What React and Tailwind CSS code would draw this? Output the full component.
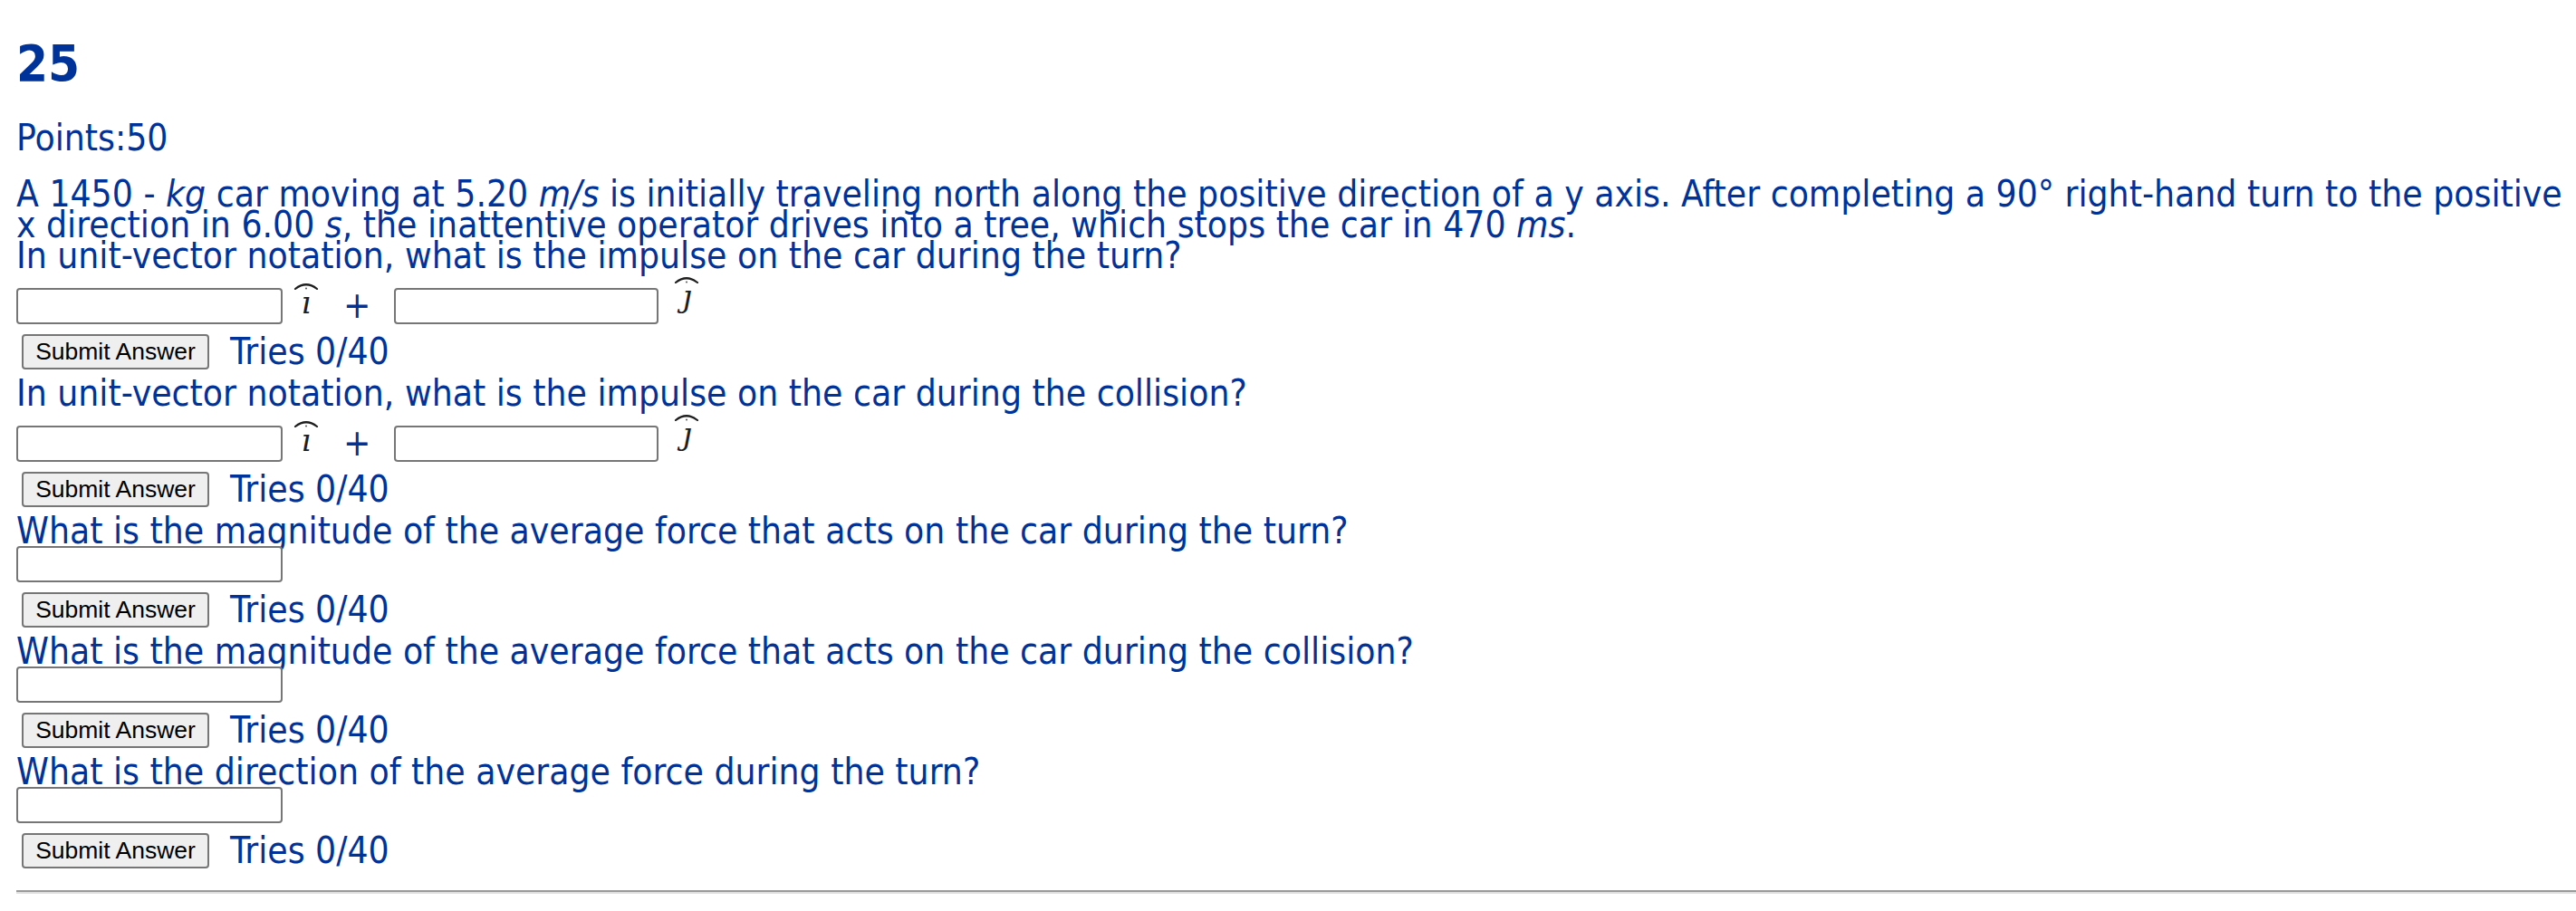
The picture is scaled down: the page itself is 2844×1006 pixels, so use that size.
import React from "react";

const FONT = { fontFamily: '"DejaVu Sans Condensed", "DejaVu Sans", Verdana, sans-serif' };
const BTN_FONT = { fontFamily: '"Liberation Sans", Arial, sans-serif' };
const SERIF = { fontFamily: '"DejaVu Serif", "Liberation Serif", serif' };

function Arc() {
  return (
    <svg width="28" height="9" viewBox="0 0 28 9" className="absolute left-0 -top-[6px]">
      <path d="M2 8 Q14 -1.5 26 8" fill="none" stroke="#1e1e1e" strokeWidth="2.2" strokeLinecap="round" />
      <circle cx="14" cy="7.5" r="1.1" fill="#666" />
    </svg>
  );
}

function UnitI() {
  return (
    <span className="relative block w-[28px] h-[34px] mb-[7px] ml-[12px]">
      <Arc />
      <span className="block text-center italic text-[34px] leading-[34px] text-[#1e1e1e]" style={SERIF}>
        ı
      </span>
    </span>
  );
}

function UnitJ() {
  return (
    <span className="relative block w-[28px] h-[34px] mb-[14px] ml-[17px]">
      <Arc />
      <span className="block text-center italic text-[34px] leading-[34px] text-[#1e1e1e]" style={SERIF}>
        ȷ
      </span>
    </span>
  );
}

function Input({ w = "w-[294px]" }) {
  return <div className={`${w} h-[40px] border-2 border-[#767676] rounded-[4px] bg-white shrink-0`} />;
}

function SubmitRow() {
  return (
    <div className="flex items-center mt-[11px] h-[38px]">
      <button
        className="ml-[6px] h-[39px] w-[207px] border-2 border-[#767676] rounded-[4px] bg-[#efefef] text-black text-[26.5px] leading-none"
        style={BTN_FONT}
      >
        Submit Answer
      </button>
      <span className="ml-[23px] text-[40.4px] leading-[34px] text-[#003399]">Tries 0/40</span>
    </div>
  );
}

function VectorRow() {
  return (
    <div className="flex items-end h-[59px]">
      <Input />
      <UnitI />
      <span className="ml-[27px] mb-[4px] text-[40.4px] leading-[34px] text-[#003399]">+</span>
      <div className="ml-[26px]">
        <div className="w-[292px] h-[40px] border-2 border-[#767676] rounded-[4px] bg-white" />
      </div>
      <UnitJ />
    </div>
  );
}

function Question({ text, vector, first }) {
  return (
    <div className={first ? "" : "mt-[10px]"}>
      <div className="text-[40.4px] leading-[34px] text-[#003399] whitespace-nowrap">{text}</div>
      {vector ? (
        <VectorRow />
      ) : (
        <div className="flex h-[40px]">
          <Input />
        </div>
      )}
      <SubmitRow />
    </div>
  );
}

export default function App() {
  return (
    <div className="min-h-[1006px] w-[2844px] bg-white overflow-hidden" style={FONT}>
      <div className="pl-[18px] pt-[42px]">
        <div className="text-[56px] leading-[56px] font-bold text-[#003399]">25</div>
        <div className="mt-[37px] text-[40.4px] leading-[34px] text-[#003399]">Points:50</div>
        <div className="mt-[28px] text-[40.4px] leading-[34px] text-[#003399]">
          <div className="whitespace-nowrap">
            A 1450 - <i>kg</i> car moving at 5.20 <i>m/s</i> is initially traveling north along the
            positive direction of a y axis. After completing a 90° right-hand turn to the positive
          </div>
          <div className="whitespace-nowrap">
            x direction in 6.00 <i>s</i>, the inattentive operator drives into a tree, which stops the
            car in 470 <i>ms</i>.
          </div>
        </div>
        <Question first text="In unit-vector notation, what is the impulse on the car during the turn?" vector />
        <Question text="In unit-vector notation, what is the impulse on the car during the collision?" vector />
        <Question text="What is the magnitude of the average force that acts on the car during the turn?" />
        <Question text="What is the magnitude of the average force that acts on the car during the collision?" />
        <Question text="What is the direction of the average force during the turn?" />
        <div className="mt-[25px] h-[4px] border-t-2 border-t-[#9a9a9a] border-b-2 border-b-[#e0e0e0]" />
      </div>
    </div>
  );
}
